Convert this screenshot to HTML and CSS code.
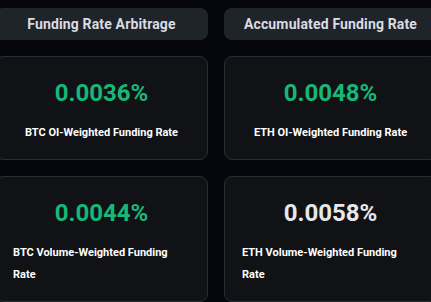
FILE: index.html
```html
<!DOCTYPE html>
<html lang="en">
<head>
    <meta charset="UTF-8">
    <meta name="viewport" content="width=device-width, initial-scale=1.0">
    <title>Funding Rates</title>
    <link rel="stylesheet" href="styles.css">
</head>
<body>
    <div class="board">
        <div class="tab">Funding Rate Arbitrage</div>
        <div class="tab">Accumulated Funding Rate</div>

        <div class="card">
            <div class="value up">0.0036%</div>
            <div class="label">BTC OI-Weighted Funding Rate</div>
        </div>
        <div class="card">
            <div class="value up">0.0048%</div>
            <div class="label">ETH OI-Weighted Funding Rate</div>
        </div>

        <div class="card">
            <div class="value up">0.0044%</div>
            <div class="label">BTC Volume-Weighted Funding Rate</div>
        </div>
        <div class="card">
            <div class="value">0.0058%</div>
            <div class="label">ETH Volume-Weighted Funding Rate</div>
        </div>
    </div>
</body>
</html>
```

FILE: styles.css
```css
body {
    margin: 0;
    background-color: #05060b;
    font-family: Roboto, "Noto Sans", sans-serif;
    overflow: hidden;
}

.board {
    display: grid;
    grid-template-columns: 213px 213px;
    gap: 16px;
    margin-left: -5px;
    padding-top: 8px;
}

.tab {
    height: 32px;
    line-height: 32px;
    background-color: #1f232a;
    border-radius: 8px;
    color: #d9dce1;
    font-size: 14px;
    font-weight: 700;
    letter-spacing: 0.15px;
    text-align: center;
}

.card {
    display: flex;
    flex-direction: column;
    align-items: center;
    padding: 20px 17px 15px;
    background-color: #101216;
    border: 1px solid #2a2d33;
    border-radius: 8px;
}

.value {
    font-size: 24px;
    line-height: 32px;
    font-weight: 700;
    color: #e6e8eb;
}

.value.up {
    color: #17b877;
}

.label {
    margin-top: 13px;
    font-size: 11px;
    line-height: 22px;
    font-weight: 700;
    color: #ffffff;
}
```
